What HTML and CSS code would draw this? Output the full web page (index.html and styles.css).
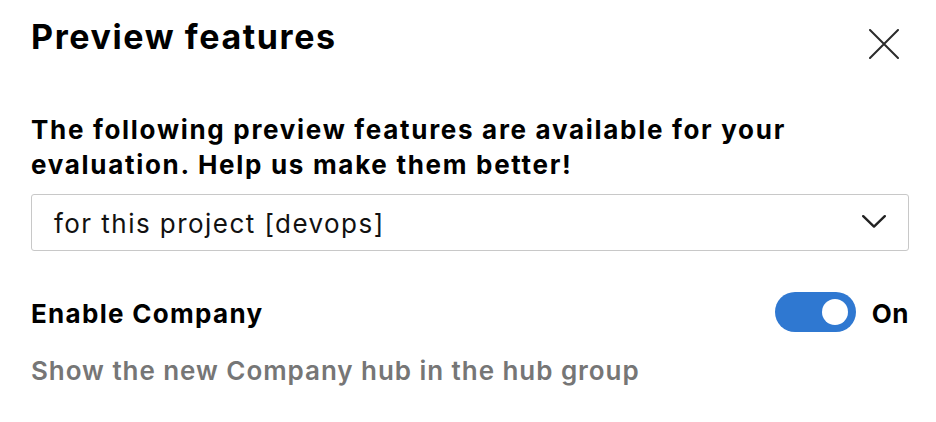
FILE: index.html
```html
<!DOCTYPE html>
<html lang="en">
<head>
<meta charset="utf-8">
<title>Preview features</title>
<link rel="stylesheet" href="styles.css">
</head>
<body>
<div class="panel">
  <div class="header">
    <h1 class="title">Preview features</h1>
    <button class="close" aria-label="Close">
      <svg width="30" height="30" viewBox="0 0 30 30"><path d="M1 1 L29 29 M29 1 L1 29" stroke="#2b2b2b" stroke-width="2" fill="none" stroke-linecap="round"/></svg>
    </button>
  </div>
  <p class="intro">The following preview features are available for your evaluation. Help us make them better!</p>
  <div class="dropdown">
    <span class="dropdown-text">for this project [devops]</span>
    <svg class="chevron" width="24" height="13" viewBox="0 0 24 13"><path d="M1.2 1.2 L12 11.6 L22.8 1.2" stroke="#222" stroke-width="2.4" fill="none" stroke-linecap="round" stroke-linejoin="round"/></svg>
  </div>
  <div class="feature-row">
    <span class="feature-name">Enable Company</span>
    <div class="toggle-wrap">
      <span class="toggle"><span class="knob"></span></span>
      <span class="toggle-label">On</span>
    </div>
  </div>
  <p class="feature-desc">Show the new Company hub in the hub group</p>
</div>
</body>
</html>
```

FILE: styles.css
```css
html, body {
  margin: 0;
  padding: 0;
  background: #ffffff;
}
body {
  font-family: Inter, "Noto Sans", "Liberation Sans", sans-serif;
  color: #000;
}
.panel {
  padding: 17px 27px 0 31px;
}
.header {
  display: flex;
  justify-content: space-between;
  align-items: flex-start;
}
.title {
  margin: 0;
  font-size: 34px;
  line-height: 40px;
  font-weight: 700;
  letter-spacing: 1.6px;
}
.close {
  margin: 12px 10px 0 0;
  padding: 0;
  border: 0;
  background: transparent;
  width: 30px;
  height: 30px;
  display: block;
}
.close svg { display: block; }
.intro {
  margin: 53px 0 0 0;
  font-size: 26px;
  line-height: 35px;
  font-weight: 700;
  letter-spacing: 1.7px;
}
.dropdown {
  margin-top: 12px;
  height: 55px;
  border: 1px solid #c8c8c8;
  border-radius: 3px;
  display: flex;
  align-items: center;
  justify-content: space-between;
  padding: 0 22px 0 22px;
}
.dropdown-text {
  font-size: 26px;
  line-height: 35px;
  font-weight: 400;
  padding-top: 2px;
  color: #111;
  letter-spacing: 1.45px;
}
.chevron { display: block; margin-top: -2px; }
.feature-row {
  margin-top: 41px;
  height: 40px;
  display: flex;
  align-items: center;
  justify-content: space-between;
}
.feature-name {
  font-size: 26px;
  line-height: 35px;
  font-weight: 700;
  padding-top: 3px;
  letter-spacing: 1.3px;
}
.toggle-wrap {
  display: flex;
  align-items: center;
  gap: 16px;
}
.toggle {
  width: 81px;
  height: 40px;
  border-radius: 20px;
  background: #2f78d1;
  display: flex;
  align-items: center;
  justify-content: flex-end;
  padding-right: 8px;
  box-sizing: border-box;
}
.knob {
  width: 26px;
  height: 26px;
  border-radius: 50%;
  background: #fff;
}
.toggle-label {
  font-size: 26px;
  line-height: 35px;
  font-weight: 700;
  padding-top: 3px;
  letter-spacing: 0.5px;
}
.feature-desc {
  margin: 21px 0 0 0;
  font-size: 26px;
  line-height: 35px;
  font-weight: 600;
  color: #767676;
  letter-spacing: 0.95px;
}
```
